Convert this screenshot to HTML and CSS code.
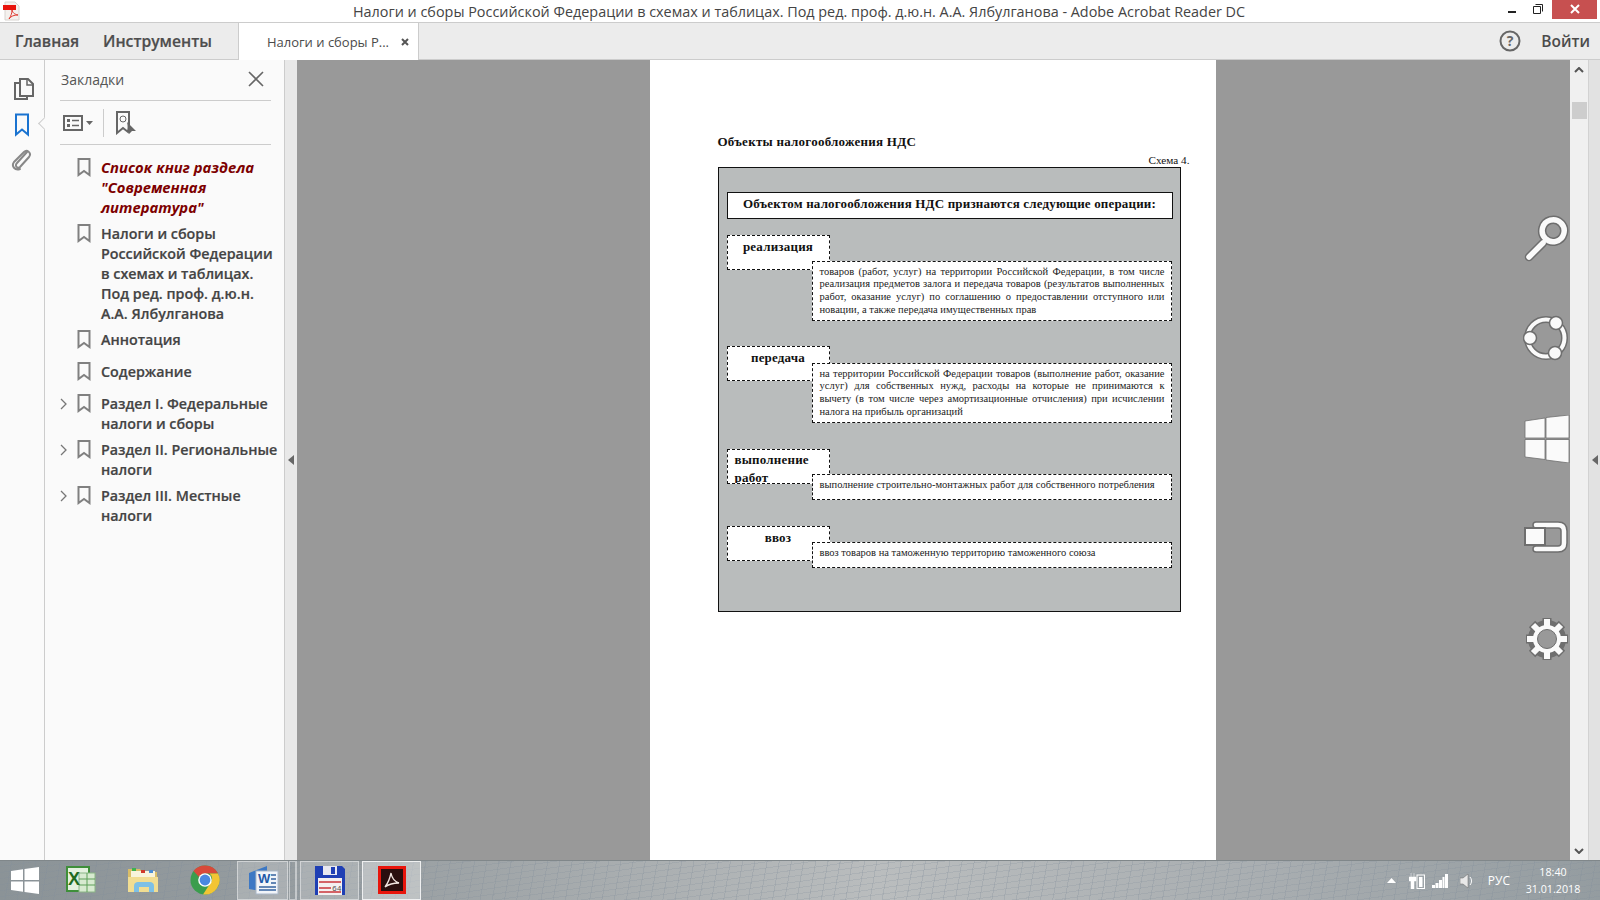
FILE: index.html
```html
<!DOCTYPE html>
<html lang="ru">
<head>
  <meta charset="UTF-8">
  <title>Adobe Acrobat Reader DC</title>
  <link rel="stylesheet" href="styles.css">
</head>
<body>

  <!-- Title bar -->
  <div class="titlebar">
    <svg class="app-icon" width="20" height="20" viewBox="0 0 20 20">
      <path d="M4 1h10l4 4v14H4z" fill="#f4f1ee" stroke="#d8d4d0"/>
      <rect x="2" y="4" width="13" height="5" fill="#e8140c"/>
      <path d="M8 18c2-3 3-6 3-9 1 3 2 4 6 5-4 0-7 1-9 4z" fill="none" stroke="#e03a30"/>
    </svg>
    <div class="title">Налоги и сборы Российской Федерации в схемах и таблицах. Под ред. проф. д.ю.н. А.А. Ялбулганова - Adobe Acrobat Reader DC</div>
    <div class="win-btns">
      <svg class="win-min" width="8" height="2"><rect width="8" height="2" fill="#222"/></svg>
      <svg class="win-max" width="10" height="10" viewBox="0 0 10 10"><path d="M2.500.5h7v7M.5 2.500h7v7h-7z" fill="none" stroke="#222"/></svg>
      <div class="win-close"><svg width="10" height="10" viewBox="0 0 10 10"><path d="M1 1l8 8M9 1l-8 8" stroke="#fff" stroke-width="2"/></svg></div>
    </div>
  </div>

  <!-- Menu and tabs -->
  <div class="navbar">
    <a class="nav-link nav-home">Главная</a>
    <a class="nav-link nav-tools">Инструменты</a>
    <div class="tab">
      <span>Налоги и сборы Р...</span>
      <svg width="8" height="8" viewBox="0 0 8 8"><path d="M1 1l6 6M7 1l-6 6" stroke="#555" stroke-width="2"/></svg>
    </div>
    <div class="nav-right">
      <svg width="22" height="22" viewBox="0 0 22 22"><circle cx="11" cy="11" r="9.500" fill="none" stroke="#666" stroke-width="2"/><text x="11" y="16" text-anchor="middle" class="help-mark">?</text></svg>
      <span class="login">Войти</span>
    </div>
  </div>

  <div class="main">
    <!-- Icon rail -->
    <div class="rail">
      <svg class="rail-pages" width="22" height="24" viewBox="0 0 22 24">
        <path d="M7 2h8l5 5v12H7z" fill="none" stroke="#666" stroke-width="2"/>
        <path d="M14 2v6h6" fill="none" stroke="#666" stroke-width="1.500"/>
        <path d="M7 6H2v16h12v-3" fill="none" stroke="#666" stroke-width="2"/>
      </svg>
      <svg class="rail-mark" width="16" height="24" viewBox="0 0 16 24">
        <path d="M2 1.500h12v20l-6-5-6 5z" fill="none" stroke="#1a73d0" stroke-width="2"/>
      </svg>
      <svg class="rail-clip" width="22" height="24" viewBox="0 0 22 24">
        <path d="M17 5l-10 11c-3 3 1 6 3 4l9-10c3-4-2-8-5-5L4 15c-3 4 1 9 6 7" fill="none" stroke="#888" stroke-width="2" stroke-linecap="round"/>
      </svg>
      <div class="rail-notch"></div>
    </div>

    <!-- Bookmarks panel -->
    <div class="panel">
      <div class="panel-head">
        <span class="panel-title">Закладки</span>
        <svg width="16" height="16" viewBox="0 0 16 16"><path d="M1 1l14 14M15 1L1 15" stroke="#666" stroke-width="1.600"/></svg>
      </div>
      <div class="panel-tools">
        <svg width="30" height="16" viewBox="0 0 30 16">
          <rect x="1" y="1" width="18" height="14" fill="none" stroke="#666" stroke-width="2"/>
          <rect x="4" y="4" width="3" height="3" fill="#666"/><rect x="4" y="9" width="3" height="3" fill="#666"/>
          <path d="M9 5.500h7M9 10.500h7" stroke="#666" stroke-width="1.500"/>
          <path d="M23 6h7l-3.500 4z" fill="#666"/>
        </svg>
        <div class="tools-sep"></div>
        <svg width="22" height="24" viewBox="0 0 22 24">
          <path d="M2 1h12v13l-1 7-5-4-6 5z" fill="none" stroke="#666" stroke-width="2"/>
          <circle cx="8" cy="8" r="3" fill="none" stroke="#666"/>
          <path d="M12 11l9 9-4 0-3 3z" fill="#666"/>
        </svg>
      </div>
      <ul class="marks">
        <li class="mark mark-red">
          <svg class="mark-icon" width="14" height="19" viewBox="0 0 14 19"><path d="M1.500 1h11v16l-5.500-4-5.500 4z" fill="none" stroke="#808080" stroke-width="2"/></svg>
          <span>Список книг раздела "Современная литература"</span>
        </li>
        <li class="mark">
          <svg class="mark-icon" width="14" height="19" viewBox="0 0 14 19"><path d="M1.500 1h11v16l-5.500-4-5.500 4z" fill="none" stroke="#808080" stroke-width="2"/></svg>
          <span>Налоги и сборы Российской Федерации в схемах и таблицах. Под ред. проф. д.ю.н. А.А. Ялбулганова</span>
        </li>
        <li class="mark">
          <svg class="mark-icon" width="14" height="19" viewBox="0 0 14 19"><path d="M1.500 1h11v16l-5.500-4-5.500 4z" fill="none" stroke="#808080" stroke-width="2"/></svg>
          <span>Аннотация</span>
        </li>
        <li class="mark mark-gap">
          <svg class="mark-icon" width="14" height="19" viewBox="0 0 14 19"><path d="M1.500 1h11v16l-5.500-4-5.500 4z" fill="none" stroke="#808080" stroke-width="2"/></svg>
          <span>Содержание</span>
        </li>
        <li class="mark mark-gap">
          <svg class="mark-arrow" width="7" height="12" viewBox="0 0 7 12"><path d="M1 1l5 5-5 5" fill="none" stroke="#777" stroke-width="1.300"/></svg>
          <svg class="mark-icon" width="14" height="19" viewBox="0 0 14 19"><path d="M1.500 1h11v16l-5.500-4-5.500 4z" fill="none" stroke="#808080" stroke-width="2"/></svg>
          <span>Раздел I. Федеральные налоги и сборы</span>
        </li>
        <li class="mark">
          <svg class="mark-arrow" width="7" height="12" viewBox="0 0 7 12"><path d="M1 1l5 5-5 5" fill="none" stroke="#777" stroke-width="1.300"/></svg>
          <svg class="mark-icon" width="14" height="19" viewBox="0 0 14 19"><path d="M1.500 1h11v16l-5.500-4-5.500 4z" fill="none" stroke="#808080" stroke-width="2"/></svg>
          <span>Раздел II. Региональные налоги</span>
        </li>
        <li class="mark">
          <svg class="mark-arrow" width="7" height="12" viewBox="0 0 7 12"><path d="M1 1l5 5-5 5" fill="none" stroke="#777" stroke-width="1.300"/></svg>
          <svg class="mark-icon" width="14" height="19" viewBox="0 0 14 19"><path d="M1.500 1h11v16l-5.500-4-5.500 4z" fill="none" stroke="#808080" stroke-width="2"/></svg>
          <span>Раздел III. Местные налоги</span>
        </li>
      </ul>
    </div>

    <div class="collapse-strip"><div class="arrow-left"></div></div>

    <!-- Document -->
    <div class="doc">
      <div class="page">
        <div class="page-title">Объекты налогообложения НДС</div>
        <div class="scheme-no">Схема 4.</div>
        <div class="scheme">
          <div class="scheme-head">Объектом налогообложения НДС признаются следующие операции:</div>

          <div class="op op-1">
            <div class="op-label">реализация</div>
            <div class="op-text op-just">товаров (работ, услуг) на территории Российской Федерации, в том числе реализация предметов залога и передача товаров (результатов выполненных работ, оказание услуг) по соглашению о предоставлении отступного или новации, а также передача имущественных прав</div>
          </div>
          <div class="op op-2">
            <div class="op-label">передача</div>
            <div class="op-text op-just">
              <span class="line">на территории Российской Федерации товаров (выполнение работ, оказание</span>
              <span class="line">услуг) для собственных нужд, расходы на которые не принимаются к</span>
              <span class="line">вычету (в том числе через амортизационные отчисления) при исчислении</span>
              налога на прибыль организаций
            </div>
          </div>
          <div class="op op-3">
            <div class="op-label op-label-wrap">выполнение работ</div>
            <div class="op-text op-short">выполнение строительно-монтажных работ для собственного потребления</div>
          </div>
          <div class="op op-4">
            <div class="op-label">ввоз</div>
            <div class="op-text op-short">ввоз товаров на таможенную территорию таможенного союза</div>
          </div>
        </div>
      </div>

      <!-- Floating side icons -->
      <div class="side-icons">
        <svg width="48" height="48" viewBox="0 0 48 48">
          <g fill="none" stroke-linecap="round">
            <path d="M20 28L6 42M38 8a11 11 0 1 1-.1-.1z" stroke="#6e6e6e" stroke-width="8.500"/>
            <path d="M20 28L6 42M38 8a11 11 0 1 1-.1-.1z" stroke="#fafafa" stroke-width="5.500"/>
          </g>
        </svg>
        <svg width="48" height="48" viewBox="0 0 48 48">
          <circle cx="23" cy="23" r="18.500" fill="none" stroke="#6e6e6e" stroke-width="7"/>
          <circle cx="23" cy="23" r="18.500" fill="none" stroke="#fafafa" stroke-width="4"/>
          <g fill="#fafafa" stroke="#6e6e6e" stroke-width="1.500">
            <circle cx="7" cy="23" r="6.500"/><circle cx="33" cy="8" r="6.500"/><circle cx="32" cy="38" r="6.500"/>
          </g>
        </svg>
        <svg width="48" height="48" viewBox="0 0 48 48">
          <path d="M2 6l20-3v20H2zM23 2.500L46 0v23H23zM2 24.500h20v20L2 42zM23 24.500h23V48l-23-3z" fill="#fafafa" stroke="#6e6e6e" stroke-width=".8"/>
        </svg>
        <svg width="48" height="48" viewBox="0 0 48 48">
          <path d="M13 10h22c4 0 6 2 6 6v12c0 4-2 6-6 6H13" fill="none" stroke="#6e6e6e" stroke-width="7.500" stroke-linecap="round"/>
          <path d="M13 10h22c4 0 6 2 6 6v12c0 4-2 6-6 6H13" fill="none" stroke="#fafafa" stroke-width="4.500" stroke-linecap="round"/>
          <rect x="2" y="13" width="20" height="17" fill="#fafafa" stroke="#6e6e6e" stroke-width="2"/>
        </svg>
        <svg width="48" height="48" viewBox="0 0 48 48">
          <circle cx="24" cy="24" r="14" fill="none" stroke="#6e6e6e" stroke-width="10"/>
          <path d="M24 3v42M3 24h42M9 9l30 30M39 9L9 39" stroke="#6e6e6e" stroke-width="9"/>
          <path d="M24 4v40M4 24h40M10 10l28 28M38 10L10 38" stroke="#fafafa" stroke-width="6"/>
          <circle cx="24" cy="24" r="14" fill="#fafafa"/>
          <circle cx="24" cy="24" r="9.500" fill="#999" stroke="#6e6e6e"/>
        </svg>
      </div>
    </div>

    <div class="scrollbar">
      <svg width="10" height="6" viewBox="0 0 10 6"><path d="M1 5l4-4 4 4" fill="none" stroke="#555" stroke-width="2"/></svg>
      <div class="scroll-thumb"></div>
      <svg class="scroll-down" width="10" height="6" viewBox="0 0 10 6"><path d="M1 1l4 4 4-4" fill="none" stroke="#555" stroke-width="2"/></svg>
    </div>
    <div class="right-strip"><div class="arrow-left"></div></div>
  </div>

  <!-- Windows taskbar -->
  <div class="taskbar">
    <svg class="tb-start" width="28" height="27" viewBox="0 0 28 27">
      <path d="M0 4l12-1.700V13H0zM13.500 2L28 0v13H13.500zM0 14.500h12v10.200L0 23zM13.500 14.500H28V27l-14.500-2z" fill="#fff"/>
    </svg>
    <div class="tb-slot tb-excel">
      <svg width="32" height="30" viewBox="0 0 32 30">
        <path d="M2 2h22v24H2z" fill="#e4f1df" stroke="#3f8f3a" stroke-width="2"/>
        <rect x="14" y="8" width="16" height="19" fill="#d7ead0" stroke="#8ab585"/>
        <path d="M14 14h16M14 20h16M22 8v19" stroke="#5d9f58"/>
        <text x="3" y="20" class="tb-x">X</text>
      </svg>
    </div>
    <div class="tb-slot tb-files">
      <svg width="32" height="30" viewBox="0 0 32 30">
        <path d="M1 4h12l2 3h15v20H1z" fill="#d9bd68"/>
        <rect x="4" y="6" width="24" height="8" fill="#f8f4dc"/>
        <rect x="5" y="3" width="4" height="3" fill="#3eb34f"/><rect x="14" y="5" width="4" height="3" fill="#d0392b"/><rect x="22" y="5" width="4" height="3" fill="#4b8fd8"/>
        <path d="M1 12h30v15H1z" fill="#f1dd92"/>
        <path d="M7 27v-6c0-3 2-4 4-4h12c2 0 4 1 4 4v6h-5v-5H12v5z" fill="#7dc0e6"/>
      </svg>
    </div>
    <div class="tb-slot tb-chrome">
      <svg width="30" height="30" viewBox="0 0 30 30">
        <circle cx="15" cy="15" r="14.500" fill="#3b9d4d"/>
        <path d="M15 .5A14.500 14.500 0 0 1 28 8.500H15a6.500 6.500 0 0 0-6 3.500L3.500 6A14.500 14.500 0 0 1 15 .5z" fill="#d8493a"/>
        <path d="M28 8.500A14.500 14.500 0 0 1 13 29.400L20.500 18a6.500 6.500 0 0 0-1-9.500z" fill="#f2c534"/>
        <circle cx="15" cy="15" r="6.800" fill="#fff"/>
        <circle cx="15" cy="15" r="5.400" fill="#4a88e0"/>
      </svg>
    </div>
    <div class="tb-slot tb-word tb-open">
      <svg width="32" height="30" viewBox="0 0 32 30">
        <path d="M2 8L20 1v26L2 24z" fill="#3d78c4"/>
        <rect x="9" y="6" width="22" height="23" fill="#f1f4f9" stroke="#aab7c8"/>
        <text x="11" y="18" class="tb-w">W</text>
        <path d="M24 10h5M24 14h5M24 18h5M12 22h17M12 25h17" stroke="#34619f" stroke-width="1.500"/>
      </svg>
    </div>
    <div class="tb-stack"></div>
    <div class="tb-slot tb-save tb-open">
      <svg width="32" height="32" viewBox="0 0 32 32">
        <path d="M1 2h27l3 3v26H1z" fill="#1f3fb4"/>
        <rect x="9" y="2" width="14" height="9" fill="#e8e8f0"/>
        <rect x="17" y="3" width="4" height="7" fill="#1f3fb4"/>
        <rect x="4" y="14" width="24" height="17" fill="#f4f0f0"/>
        <path d="M5 18h22M5 24h12M5 28h22" stroke="#c9343a" stroke-width="1.500"/>
        <text x="18" y="27" class="tb-64">64</text>
      </svg>
    </div>
    <div class="tb-slot tb-acrobat tb-active">
      <svg width="28" height="28" viewBox="0 0 28 28">
        <rect x="1.500" y="1.500" width="25" height="25" fill="#2a0e0e" stroke="#e8150c" stroke-width="3"/>
        <path d="M7 21c3-4 5-9 6-14 .5 3 2 8 8 10-5 0-10 1-14 4z" fill="none" stroke="#f2e4e0" stroke-width="1.300"/>
      </svg>
    </div>

    <div class="tray">
      <svg width="9" height="5" viewBox="0 0 9 5"><path d="M0 5l4.500-5L9 5z" fill="#fff"/></svg>
      <svg class="tray-power" width="16" height="16" viewBox="0 0 16 16"><path d="M2 0v4M5 0v4M0 4h7v4H5v8H2V8H0z" fill="#fff" stroke="#fff" stroke-width=".5"/><rect x="8" y="2" width="7.500" height="13.500" fill="none" stroke="#fff"/><rect x="10" y="4" width="3.500" height="10" fill="#fff"/></svg>
      <svg class="tray-signal" width="16" height="14" viewBox="0 0 16 14"><path d="M0 11h3v3H0zM3.500 9h3v5h-3zM7 6h3v8H7zM10.500 3h2v11h-2zM13 0h3v14h-3z" fill="#fff"/></svg>
      <svg class="tray-sound" width="14" height="16" viewBox="0 0 14 16"><path d="M0 5h3l5-4v14l-5-4H0z" fill="#e8e8e8" stroke="#666" stroke-width=".5"/><path d="M10 4c2 2 2 6 0 8" fill="none" stroke="#fff"/></svg>
      <span class="tray-lang">РУС</span>
      <div class="tray-clock"><div>18:40</div><div>31.01.2018</div></div>
    </div>
  </div>

</body>
</html>
```

FILE: styles.css
```css
* {
  box-sizing: border-box;
}

html, body {
  height: 100%;
}

body {
  margin: 0;
  display: flex;
  flex-direction: column;
  height: 900px;
  overflow: hidden;
  background: #fff;
  font-family: "Open Sans", "Noto Sans", sans-serif;
  color: #4b4b4b;
}

/* title bar */
.titlebar {
  height: 23px;
  flex: none;
  display: flex;
  align-items: center;
  position: relative;
  background: #fff;
  border-bottom: 1px solid #ccc;
}

.app-icon {
  margin-left: 1px;
  margin-top: -1px;
}

.title {
  position: absolute;
  left: 353px;
  top: 1px;
  font-size: 14.400px;
  line-height: 21px;
  color: #444;
  white-space: nowrap;
}

.win-btns {
  margin-left: auto;
  display: flex;
  align-items: flex-start;
  height: 100%;
  margin-top: -1px;
  padding-right: 3px;
}

.win-min {
  margin: 11px 17px 0 0;
}

.win-max {
  margin: 4px 0 0 0;
}

.win-close {
  margin-left: 9px;
  width: 45px;
  height: 19px;
  background: #c75050;
  display: flex;
  align-items: center;
  justify-content: center;
}

/* menu and tabs */
.navbar {
  height: 37px;
  flex: none;
  display: flex;
  align-items: stretch;
  background: #ececec;
  border-bottom: 1px solid #ccc;
}

.nav-link {
  font-size: 15.500px;
  font-weight: 600;
  line-height: 36px;
  color: #4e4e4e;
  -webkit-text-stroke: .2px #4e4e4e;
}

.nav-home {
  margin-left: 15px;
}

.nav-tools {
  margin-left: 24px;
  font-size: 15.700px;
}

.tab {
  margin-left: 26px;
  width: 181px;
  height: 37px;
  background: #fff;
  border-left: 1px solid #ccc;
  border-right: 1px solid #ccc;
  display: flex;
  align-items: center;
  padding-left: 28px;
  font-size: 13px;
}

.tab span {
  width: 132px;
  white-space: nowrap;
}

.tab svg {
  margin-left: 2px;
}

.nav-right {
  margin-left: auto;
  display: flex;
  align-items: center;
  padding-right: 10px;
}

.help-mark {
  font-family: "Open Sans", sans-serif;
  font-weight: 700;
  font-size: 14px;
  fill: #666;
}

.login {
  margin-left: 20px;
  font-size: 15.500px;
  font-weight: 600;
}

/* main area */
.main {
  flex: 1;
  display: flex;
  min-height: 0;
}

.rail {
  width: 45px;
  flex: none;
  position: relative;
  background: #fafafa;
  border-right: 1px solid #ccc;
  display: flex;
  flex-direction: column;
  align-items: center;
  padding-top: 17px;
}

.rail-pages {
  margin-left: 3px;
}

.rail-mark {
  margin: 12px 1px 0 0;
}

.rail-clip {
  margin: 10px 2px 0 0;
}

.rail-notch {
  position: absolute;
  right: -1px;
  top: 57px;
  width: 9px;
  height: 9px;
  margin-top: 2px;
  background: #fafafa;
  border-left: 1px solid #ccc;
  border-bottom: 1px solid #ccc;
  transform: translateX(4px) rotate(45deg);
}

.panel {
  width: 240px;
  flex: none;
  background: #fafafa;
  border-right: 1px solid #ccc;
  padding: 0 13px 0 15px;
}

.panel-head {
  height: 41px;
  display: flex;
  align-items: center;
  justify-content: space-between;
  padding: 0 7px 2px 1px;
  border-bottom: 1px solid #ccc;
}

.panel-title {
  font-size: 14px;
  color: #555;
}

.panel-tools {
  height: 44px;
  display: flex;
  align-items: center;
  padding-left: 3px;
  border-bottom: 1px solid #ccc;
}

.tools-sep {
  width: 1px;
  height: 28px;
  margin: 0 11px 0 10px;
  background: #ccc;
}

.marks {
  list-style: none;
  margin: 0;
  padding: 13px 0 0 0;
}

.mark {
  position: relative;
  display: flex;
  padding-left: 17px;
  margin-bottom: 6px;
  font-size: 14.300px;
  font-weight: 600;
  line-height: 20px;
  color: #444;
  -webkit-text-stroke: .2px #444;
  margin-right: -9px;
}

.mark-gap {
  margin-top: 12px;
}

.mark-arrow {
  position: absolute;
  left: 0;
  top: 4px;
}

.mark-icon {
  flex: none;
  margin-right: 10px;
}

.mark-red {
  color: #7d0000;
  -webkit-text-stroke: 0;
  font-size: 14.800px;
  font-style: italic;
  font-weight: 700;
  margin-bottom: 7px;
}

.mark-red span {
  margin-top: -1px;
}

.collapse-strip, .right-strip {
  flex: none;
  background: #e8e8e8;
  display: flex;
  align-items: center;
  justify-content: center;
}

.collapse-strip {
  width: 12px;
}

.right-strip {
  width: 12px;
  background: #e2e2e2;
  border-left: 1px solid #d2d2d2;
}

.arrow-left {
  width: 0;
  height: 0;
  border-top: 5px solid transparent;
  border-bottom: 5px solid transparent;
  border-right: 6px solid #666;
}

/* document */
.doc {
  flex: 1;
  position: relative;
  background: #999;
  display: flex;
  justify-content: center;
  overflow: hidden;
}

.page {
  width: 566px;
  height: 100%;
  background: #fff;
  margin-left: -2px;
  padding: 74px 27px 0 68px;
  font-family: "Liberation Serif", serif;
  color: #111;
}

.page-title {
  font-size: 13px;
  line-height: 16px;
  font-weight: 700;
  letter-spacing: .25px;
}

.scheme-no {
  font-size: 11.200px;
  line-height: 12px;
  text-align: right;
  margin-top: 4px;
  margin-bottom: 1px;
  margin-right: -1px;
}

.scheme {
  width: 463px;
  height: 445px;
  background: #b9bcbc;
  border: 1.500px solid #111;
  padding: 23.500px 7px 0 8px;
}

.scheme-head {
  height: 27px;
  background: #fff;
  border: 1.500px solid #111;
  font-size: 13px;
  font-weight: 700;
  letter-spacing: .17px;
  line-height: 22px;
  text-align: center;
}

/* label and text boxes overlap, so they share one grid cell */
.op {
  display: grid;
  grid-template-columns: 85px 18px 342px;
  grid-template-rows: auto;
}

.op-1 { margin-top: 16px; }
.op-2 { margin-top: 25px; }
.op-3 { margin-top: 26px; }
.op-4 { margin-top: 26px; }

.op-label {
  grid-column: 1 / 3;
  grid-row: 1;
  height: 35px;
  overflow: hidden;
  background: #fff;
  border: 1.500px dashed #111;
  font-size: 13px;
  font-weight: 700;
  letter-spacing: .2px;
  line-height: 17px;
  text-align: center;
  padding-top: 2px;
}

.op-label-wrap {
  text-align: left;
  line-height: 18px;
  padding-top: 1.500px;
  padding-left: 7px;
  padding-right: 20px;
}

.op-text {
  grid-column: 2 / 4;
  grid-row: 1;
  z-index: 1;
  background: #fff;
  border: 1.500px dashed #111;
  font-size: 10.500px;
  line-height: 12.700px;
  color: #222;
  padding: 4px 6px 0 7px;
}

.op-1 .op-text { margin-top: 26px; }
.op-2 .op-text { margin-top: 17px; }
.op-3 .op-text { margin-top: 25px; }
.op-4 .op-text { margin-top: 16px; }

.op-just {
  text-align: justify;
  height: 60px;
}

.line {
  display: block;
  text-align-last: justify;
}

.op-short {
  height: 26px;
  white-space: nowrap;
}

/* floating side icons */
.side-icons {
  position: absolute;
  right: -1px;
  top: 155px;
  display: flex;
  flex-direction: column;
  gap: 52px;
}

/* scrollbar */
.scrollbar {
  width: 18px;
  flex: none;
  background: #f0f0f0;
  display: flex;
  flex-direction: column;
  align-items: center;
  padding-top: 7px;
}

.scroll-thumb {
  width: 15px;
  height: 17px;
  margin-top: 29px;
  background: #cdcdcd;
}

.scroll-down {
  margin-top: auto;
  margin-bottom: 6px;
}

/* taskbar */
.taskbar {
  height: 40px;
  flex: none;
  display: flex;
  align-items: center;
  position: relative;
  background-color: #a2a8aa;
  background-image:
    repeating-linear-gradient(100deg, transparent 0 11px, rgba(130, 142, 155, .28) 11px 12px),
    repeating-linear-gradient(172deg, transparent 0 5px, rgba(130, 142, 155, .22) 5px 6px),
    linear-gradient(90deg, #8b9397 0%, #9aa0a3 25%, #babdbe 55%, #a8adb0 80%, #949ca0 100%);
  border-top: 1px solid #80878a;
}

.tb-start {
  margin-left: 11px;
}

.tb-slot {
  height: 39px;
  display: flex;
  align-items: center;
  justify-content: center;
  flex: none;
}

.tb-slot svg {
  margin-top: -2px;
}

.tb-excel { margin-left: 24px; width: 36px; }
.tb-files { margin-left: 26px; width: 36px; }
.tb-chrome { margin-left: 26px; width: 36px; }

.tb-word {
  margin-left: 14px;
  width: 51px;
}

.tb-open {
  background: rgba(255, 255, 255, .2);
  border: 1px solid rgba(255, 255, 255, .45);
}

.tb-stack {
  width: 8px;
  height: 39px;
  margin-left: 1px;
  border: 1px solid rgba(255, 255, 255, .45);
  border-right-width: 2px;
}

.tb-save {
  margin-left: 3px;
  width: 59px;
}

.tb-acrobat {
  margin-left: 3px;
  width: 59px;
}

.tb-active {
  background: rgba(255, 255, 255, .35);
  border: 1px solid rgba(255, 255, 255, .75);
}

.tb-x {
  font-family: "Liberation Sans", sans-serif;
  font-weight: 700;
  font-size: 18px;
  fill: #1f6b1f;
}

.tb-w {
  font-family: "Liberation Sans", sans-serif;
  font-weight: 700;
  font-size: 13px;
  fill: #1f5aa8;
}

.tb-64 {
  font-family: "Liberation Mono", monospace;
  font-size: 8px;
  fill: #555;
}

.tray {
  margin-left: auto;
  display: flex;
  align-items: center;
  padding-right: 18px;
  color: #fff;
}

.tray-power {
  margin-left: 13px;
}

.tray-signal {
  margin-left: 7px;
}

.tray-sound {
  margin-left: 12px;
}

.tray-lang {
  font-size: 12px;
  margin-left: 14px;
}

.tray-clock {
  margin-left: 14px;
  width: 58px;
  font-size: 10.700px;
  line-height: 17px;
  text-align: center;
}
```
